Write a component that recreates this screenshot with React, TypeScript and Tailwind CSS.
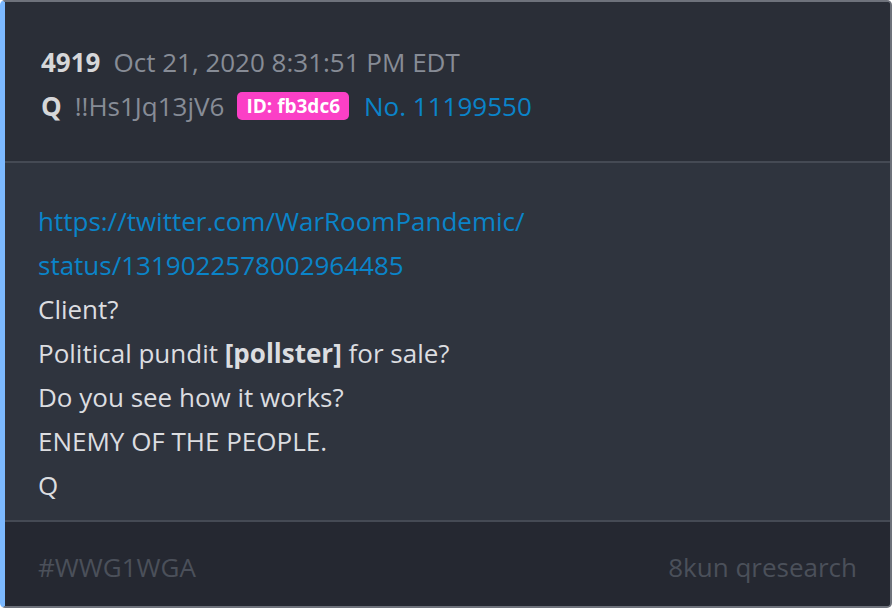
export default function App() {
  return (
    <div className="w-[894px] h-[610px] bg-white" style={{ fontFamily: '"Open Sans", "Noto Sans", sans-serif' }}>
      <div className="w-[892px] h-[608px] flex flex-col rounded-[5px] border-2 border-[#6e727b] border-l-[5px] border-l-[#7cb9ff] bg-[#2f343e] overflow-hidden">
        {/* Header */}
        <div className="bg-[#2a2e37] pl-[36px] pt-[38px] h-[159px] text-[26px] leading-[44px]">
          <div className="flex items-center gap-[13px]">
            <span className="font-bold text-[#d6d7d9]">4919</span>
            <span className="text-[#878c96]">Oct 21, 2020 8:31:51 PM EDT</span>
          </div>
          <div className="flex items-center">
            <span className="font-bold text-[#d6d7d9] mr-[13px]">Q</span>
            <span className="text-[#878c96] mr-[13px]">!!Hs1Jq13jV6</span>
            <span className="bg-[#fb40c6] text-white font-bold text-[19px] leading-[28px] px-[9px] rounded-[5px] mr-[15px]">
              ID: fb3dc6
            </span>
            <span className="text-[#0a84c9]">No. 11199550</span>
          </div>
        </div>
        <div className="h-[2px] bg-[#454a54]" />
        {/* Body */}
        <div className="pl-[33px] pt-[36px] h-[357px] text-[26px] leading-[44px] text-[#dcdde0]">
          <div className="text-[#0a84c9]">https://twitter.com/WarRoomPandemic/</div>
          <div className="text-[#0a84c9]">status/1319022578002964485</div>
          <div>Client?</div>
          <div>
            Political pundit <span className="font-bold">[pollster]</span> for sale?
          </div>
          <div>Do you see how it works?</div>
          <div>ENEMY OF THE PEOPLE.</div>
          <div>Q</div>
        </div>
        <div className="h-[2px] bg-[#454a54]" />
        {/* Footer */}
        <div className="flex-1 bg-[#252831] flex items-start justify-between pl-[33px] pr-[33px] pt-[23px] text-[26px] leading-[44px] text-[#4b505a]">
          <span>#WWG1WGA</span>
          <span>8kun qresearch</span>
        </div>
      </div>
    </div>
  );
}
